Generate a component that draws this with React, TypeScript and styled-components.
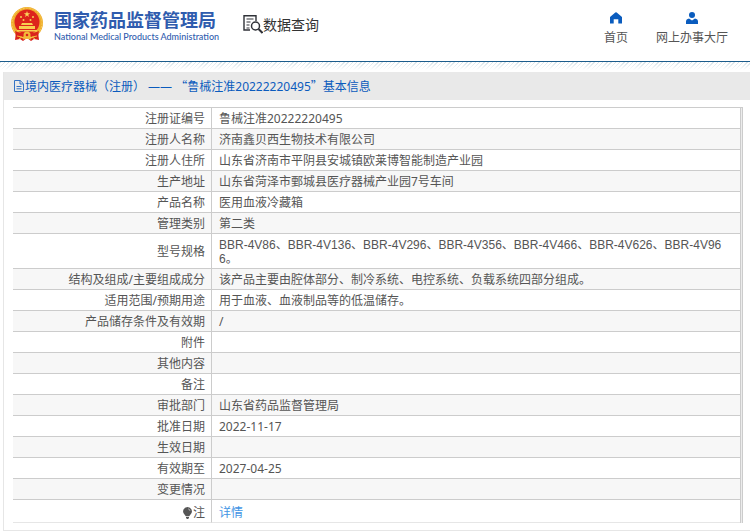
import React from 'react';
import styled, { createGlobalStyle } from 'styled-components';

const GlobalStyle = createGlobalStyle`
  * { box-sizing: border-box; }
  body {
    margin: 0;
    background: #fff;
    color: #555;
    font: 12px/14px "Noto Sans", "Noto Sans CJK SC", sans-serif;
  }
  svg { display: block; flex: none; }
`;

const Header = styled.header`
  display: flex;
  align-items: flex-start;
  height: 62px;
  padding: 0 22px 0 10px;
  border-bottom: 1px solid #1b5c8c;
`;

const Brand = styled.a`
  display: flex;
  gap: 10px;
  padding-top: 6px;
  color: #2f5cae;
  text-decoration: none;
`;

const BrandText = styled.span`
  display: flex;
  flex-direction: column;
  gap: 2px;
  padding-top: 3px;
`;

const BrandName = styled.strong`
  font: 700 18px/20px "Noto Sans CJK SC", sans-serif;
`;

const BrandEnglish = styled.span`
  font: 500 9px/12px Lato, sans-serif;
`;

const QueryTitle = styled.h1`
  display: flex;
  align-items: center;
  margin: 14px 0 0 24px;
  color: #333;
  font: 400 14px/20px "Noto Sans CJK SC", sans-serif;
`;

const Nav = styled.nav`
  display: flex;
  gap: 28px;
  margin-left: auto;
  padding-top: 12px;
`;

const NavLink = styled.a`
  display: flex;
  flex-direction: column;
  align-items: center;
  gap: 7px;
  color: #555;
  text-decoration: none;
`;

const Hatch = styled.div`
  height: 10px;
  background:
    linear-gradient(#fff0, #fff 80%),
    repeating-linear-gradient(135deg, #d5e2e8 0 1px, #fff 1px 3px);
`;

const Panel = styled.main`
  margin-left: 3px;
  border: solid #e6e6e6;
  border-width: 0 0 1px 1px;
`;

const PanelTitle = styled.h2`
  display: flex;
  align-items: center;
  height: 28px;
  margin: 0;
  padding: 0 10px;
  gap: 1px;
  background: #e9e9e9;
  color: #0b5bbd;
  font-size: 12px;
  font-weight: 400;
`;

const FullWidth = styled.span`
  font-family: "Noto Sans CJK SC", sans-serif;
`;

const PanelBody = styled.div`
  padding: 7px 7px 7px 9px;
`;

const TableFrame = styled.div`
  padding-right: 1px;
  border: solid #ccc;
  border-width: 1px 1px 0 0;
  background: #ececec;
`;

const RecordTable = styled.table`
  width: 100%;
  border-spacing: 0;
  border-right: 1px solid #ccc;
  background: #fff;
`;

const RecordRow = styled.tr`
  height: 21px;
  &:nth-child(even) { background: #f7f7f7; }
  &:last-child {
    height: 23px;
    background: #fff;
  }
  &:last-child > * {
    padding-top: 6px;
    border-bottom-color: #e6e6e6;
  }
`;

const RowLabel = styled.th`
  width: 199px;
  padding: 4px 6px 2px 0;
  border: solid #ccc;
  border-width: 0 1px 1px 0;
  font-weight: 400;
  text-align: right;
`;

const RowValue = styled.td<{ $codes: boolean }>`
  padding: 4px 6px 2px 7px;
  border-bottom: 1px solid #ccc;
  word-break: break-all;
  ${({ $codes }) => $codes && 'font-family: "Liberation Sans", "Noto Sans CJK SC", sans-serif;'}
`;

const NoteLabel = styled.span`
  display: flex;
  align-items: center;
  justify-content: flex-end;
  gap: 1px;
`;

const DetailLink = styled.a`
  color: #4294e4;
  text-decoration: none;
`;

const Emblem = () => (
  <svg width="34" height="36" viewBox="0 0 34 36" aria-hidden="true">
    <path d="M6 26 5 34l5-1 3 2 4-3 4 3 3-2 5 1-1-8z" fill="#d9221c" />
    <circle cx="17" cy="17" r="16" fill="#efad2c" />
    <circle cx="17" cy="17" r="15" fill="none" stroke="#f8cd58" strokeWidth="1" strokeDasharray="2 1" />
    <circle cx="17" cy="16" r="12.5" fill="#dd241c" />
    <path d="m17 5 .8 2.3h2.4l-2 1.4.8 2.3-2-1.4-2 1.4.8-2.3-2-1.4h2.4z" fill="#fbd65a" />
    <g fill="#f8ce50">
      <circle cx="11" cy="11" r="1" />
      <circle cx="23" cy="11" r="1" />
      <circle cx="13.5" cy="14" r="1" />
      <circle cx="20.5" cy="14" r="1" />
      <path d="M12 17h10l1 2H11zM9 20h16v3H9zM7 24h20v1.5H7z" />
    </g>
    <path d="M5 25c6 3 18 3 24 0l-1 5-6 1-5-2-5 2-6-1z" fill="#d9221c" />
    <circle cx="17" cy="29" r="3.5" fill="#f4b938" />
    <circle cx="17" cy="29" r="1.3" fill="#d9221c" />
    <path d="m7 30 5 1-3 2M27 30l-5 1 3 2M13 33l4-1 4 1" fill="none" stroke="#f4b938" />
  </svg>
);

const QueryIcon = () => (
  <svg width="20" height="20" viewBox="0 0 20 20" fill="none" stroke="#303238" aria-hidden="true">
    <path d="M13 7V1.7H1V16h6" strokeWidth="1.4" />
    <path d="M3.5 5h7M3.5 8h4M3.5 11h3M3.5 14h3" strokeWidth="1.2" />
    <circle cx="12.5" cy="12" r="4" strokeWidth="1.5" />
    <path d="m15.5 15 4 4" strokeWidth="2" />
  </svg>
);

const HomeIcon = () => (
  <svg width="12" height="12" viewBox="0 0 12 12" fill="#0a5cbe" aria-hidden="true">
    <path d="M5.3.5a1 1 0 0 1 1.4 0L12 5v6.5H8.3V7.3H3.7v4.2H0V5z" />
  </svg>
);

const PersonIcon = () => (
  <svg width="12" height="12" viewBox="0 0 12 12" fill="#0a5cbe" aria-hidden="true">
    <circle cx="6" cy="3" r="3" />
    <path d="M0 12V9.5Q0 7 3 6.5L6 8.5l3-2q3 .5 3 3V12z" />
  </svg>
);

const DocumentIcon = () => (
  <svg width="10" height="12" viewBox="0 0 10 12" fill="none" stroke="#3473c4" aria-hidden="true">
    <path d="M.5.5h5.7l3.3 3.3v7.7h-9zM6 .5V4h3.5M2.5 6.5h5M2.5 8.8h5" />
  </svg>
);

const BulbIcon = () => (
  <svg width="9" height="12" viewBox="0 0 9 12" aria-hidden="true">
    <path d="M4.5 0a4.4 4.4 0 0 1 3 7.6L6.2 9.2H2.8L1.5 7.6A4.4 4.4 0 0 1 4.5 0zM3 10h3v1L5 12H4l-1-1z" fill="#555" />
    <path d="M5 1.8q2 .3 2 2.2" fill="none" stroke="#ccc" strokeWidth=".7" />
  </svg>
);

type RecordItem = { label: string; value: string; codes?: boolean };

const records: RecordItem[] = [
  { label: '注册证编号', value: '鲁械注准20222220495' },
  { label: '注册人名称', value: '济南鑫贝西生物技术有限公司' },
  { label: '注册人住所', value: '山东省济南市平阴县安城镇欧莱博智能制造产业园' },
  { label: '生产地址', value: '山东省菏泽市鄄城县医疗器械产业园7号车间' },
  { label: '产品名称', value: '医用血液冷藏箱' },
  { label: '管理类别', value: '第二类' },
  {
    label: '型号规格',
    value: 'BBR-4V86、BBR-4V136、BBR-4V296、BBR-4V356、BBR-4V466、BBR-4V626、BBR-4V966。',
    codes: true,
  },
  { label: '结构及组成/主要组成成分', value: '该产品主要由腔体部分、制冷系统、电控系统、负载系统四部分组成。' },
  { label: '适用范围/预期用途', value: '用于血液、血液制品等的低温储存。' },
  { label: '产品储存条件及有效期', value: '/' },
  { label: '附件', value: '' },
  { label: '其他内容', value: '' },
  { label: '备注', value: '' },
  { label: '审批部门', value: '山东省药品监督管理局' },
  { label: '批准日期', value: '2022-11-17' },
  { label: '生效日期', value: '' },
  { label: '有效期至', value: '2027-04-25' },
  { label: '变更情况', value: '' },
];

export default function App() {
  return (
    <div lang="zh-CN">
      <GlobalStyle />
      <Header>
        <Brand href="#">
          <Emblem />
          <BrandText>
            <BrandName>国家药品监督管理局</BrandName>
            <BrandEnglish>National Medical Products Administration</BrandEnglish>
          </BrandText>
        </Brand>
        <QueryTitle><QueryIcon />数据查询</QueryTitle>
        <Nav>
          <NavLink href="#"><HomeIcon />首页</NavLink>
          <NavLink href="#"><PersonIcon />网上办事大厅</NavLink>
        </Nav>
      </Header>
      <Hatch />
      <Panel>
        <PanelTitle>
          <DocumentIcon />
          <span>
            境内医疗器械（注册） —— <FullWidth>“</FullWidth>鲁械注准20222220495<FullWidth>”</FullWidth>基本信息
          </span>
        </PanelTitle>
        <PanelBody>
          <TableFrame>
            <RecordTable>
              <tbody>
                {records.map(({ label, value, codes = false }) => (
                  <RecordRow key={label}>
                    <RowLabel scope="row">{label}</RowLabel>
                    <RowValue $codes={codes}>{value}</RowValue>
                  </RecordRow>
                ))}
                <RecordRow>
                  <RowLabel scope="row"><NoteLabel><BulbIcon />注</NoteLabel></RowLabel>
                  <RowValue $codes={false}><DetailLink href="#">详情</DetailLink></RowValue>
                </RecordRow>
              </tbody>
            </RecordTable>
          </TableFrame>
        </PanelBody>
      </Panel>
    </div>
  );
}
